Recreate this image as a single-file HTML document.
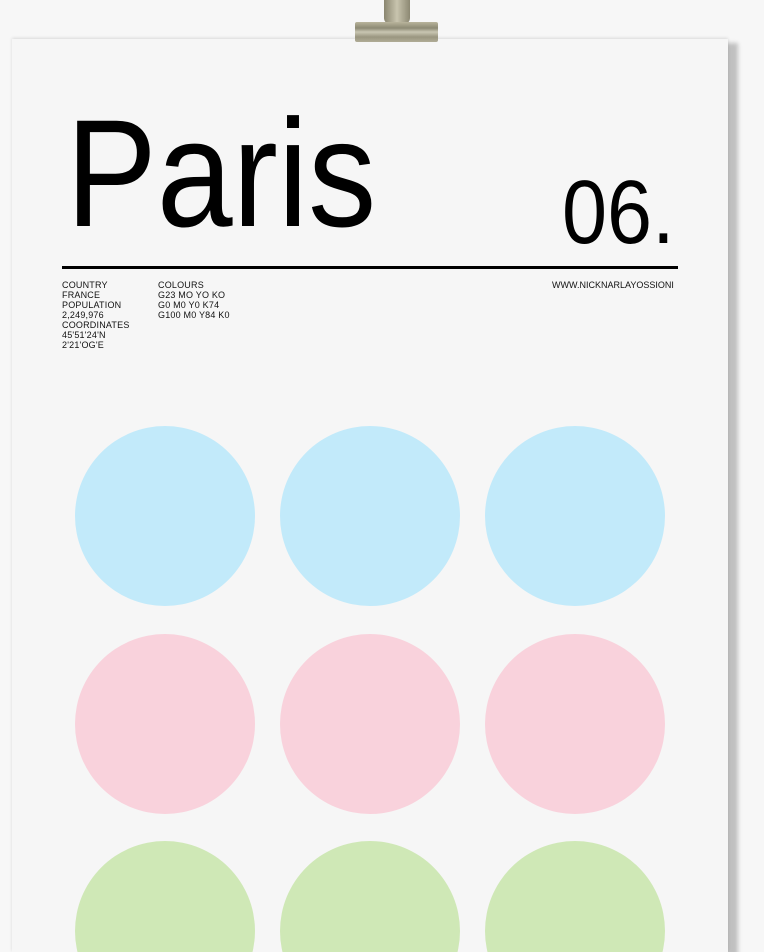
<!DOCTYPE html>
<html><head><style>
html,body{margin:0;padding:0;width:764px;height:952px;overflow:hidden;background:#f7f7f7;font-family:"Liberation Sans",sans-serif}
.wrap{position:absolute;left:0;top:0;width:764px;height:952px;overflow:hidden}
.poster{position:absolute;left:12px;top:39px;width:716px;height:913px;background:#f6f6f6;box-shadow:0 -1px 3px rgba(0,0,0,.12),10px 4px 4px rgba(0,0,0,.22)}
.t{position:absolute;color:#000;white-space:nowrap;line-height:1}
.c{position:absolute;width:180px;height:180px;border-radius:50%}
.s{position:absolute;font-size:9px;line-height:10px;color:#111;white-space:nowrap;letter-spacing:0.2px}
.bot{position:absolute;left:0;top:841px;width:764px;height:111px;overflow:hidden}
</style></head><body><div class="wrap">
<div class="poster"></div>
<div style="position:absolute;left:384px;top:0;width:26px;height:24px;background:linear-gradient(90deg,#8a8670,#c8c4ae,#8c8872);border-radius:0 0 6px 6px"></div>
<div style="position:absolute;left:355px;top:22px;width:83px;height:20px;background:linear-gradient(180deg,#b9b49c,#8d8a74 30%,#c9c6b2 50%,#9a9680 75%,#b0ac96);border-radius:2px"></div>
<div class="t" style="left:66px;top:97px;font-size:153px;transform:scaleX(0.89);transform-origin:0 0;">Paris</div>
<div class="t" style="left:562px;top:168px;font-size:90px;transform:scaleX(0.9);transform-origin:0 0;">06.</div>
<div style="position:absolute;left:62px;top:266px;width:616px;height:3px;background:#000"></div>
<div class="s" style="left:62px;top:280px">COUNTRY<br>FRANCE<br>POPULATION<br>2,249,976<br>COORDINATES<br>45'51'24'N<br>2'21'OG'E</div>
<div class="s" style="left:158px;top:280px">COLOURS<br>G23 MO YO KO<br>G0 M0 Y0 K74<br>G100 M0 Y84 K0</div>
<div class="s" style="left:552px;top:280px;letter-spacing:0">WWW.NICKNARLAYOSSIONI</div>
<div class="c" style="left:75px;top:426px;background:#c2eafa"></div>
<div class="c" style="left:280px;top:426px;background:#c2eafa"></div>
<div class="c" style="left:485px;top:426px;background:#c2eafa"></div>
<div class="c" style="left:75px;top:634px;background:#f9d2dc"></div>
<div class="c" style="left:280px;top:634px;background:#f9d2dc"></div>
<div class="c" style="left:485px;top:634px;background:#f9d2dc"></div>
<div class="bot">
<div class="c" style="left:75px;top:0;background:#cfe8b6"></div>
<div class="c" style="left:280px;top:0;background:#cfe8b6"></div>
<div class="c" style="left:485px;top:0;background:#cfe8b6"></div>
</div>
</div></body></html>
